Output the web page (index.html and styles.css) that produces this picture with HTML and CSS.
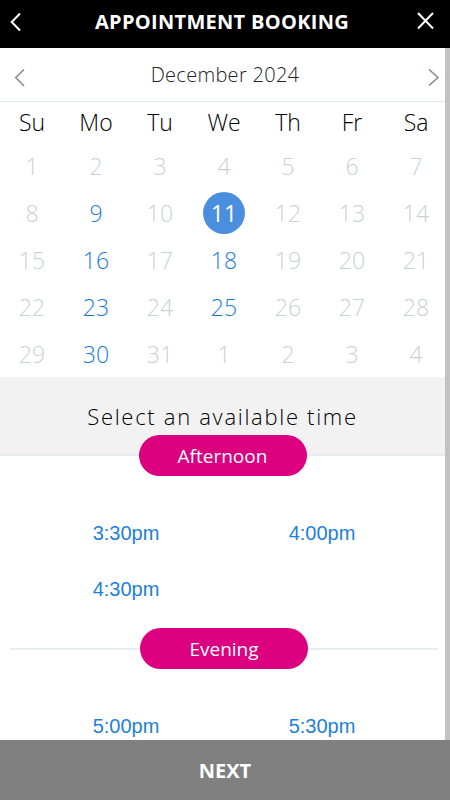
FILE: index.html
```html
<!DOCTYPE html>
<html lang="en">
<head>
  <meta charset="UTF-8" />
  <meta name="viewport" content="width=device-width, initial-scale=1.0" />
  <title>Appointment Booking</title>
  <link rel="stylesheet" href="styles.css">
</head>
<body>
  <header class="topbar">
    <svg class="top-icon back" width="24" height="24" viewBox="0 0 24 24"><path d="M12 3.5 L3.7 12 L12 20.5" /></svg>
    <h1>APPOINTMENT BOOKING</h1>
    <svg class="top-icon close" width="24" height="24" viewBox="0 0 24 24"><path d="M6 3 L21 18.5 M21 3 L6 18.5" /></svg>
  </header>

  <main class="content">
    <div class="month-nav">
      <svg class="nav-arrow" width="24" height="24" viewBox="0 0 24 24"><path d="M18 6.5 L9.7 14.5 L18 23" /></svg>
      <span class="month-title">December 2024</span>
      <svg class="nav-arrow" width="24" height="24" viewBox="0 0 24 24"><path d="M9 6.5 L18 14.5 L9 22.5" /></svg>
    </div>

    <div class="weekdays">
      <span>Su</span><span>Mo</span><span>Tu</span><span>We</span><span>Th</span><span>Fr</span><span>Sa</span>
    </div>

    <div class="days">
      <span class="day">1</span><span class="day">2</span><span class="day">3</span><span class="day">4</span><span class="day">5</span><span class="day">6</span><span class="day">7</span>
      <span class="day">8</span><span class="day open">9</span><span class="day">10</span><span class="day"><b class="selected">11</b></span><span class="day">12</span><span class="day">13</span><span class="day">14</span>
      <span class="day">15</span><span class="day open">16</span><span class="day">17</span><span class="day open">18</span><span class="day">19</span><span class="day">20</span><span class="day">21</span>
      <span class="day">22</span><span class="day open">23</span><span class="day">24</span><span class="day open">25</span><span class="day">26</span><span class="day">27</span><span class="day">28</span>
      <span class="day">29</span><span class="day open">30</span><span class="day">31</span><span class="day">1</span><span class="day">2</span><span class="day">3</span><span class="day">4</span>
    </div>

    <div class="time-head">Select an available time</div>

    <div class="period first">
      <span class="pill">Afternoon</span>
    </div>
    <div class="slots">
      <a class="slot">3:30pm</a>
      <a class="slot">4:00pm</a>
      <a class="slot">4:30pm</a>
    </div>

    <div class="period lined">
      <span class="line"></span>
      <span class="pill">Evening</span>
      <span class="line"></span>
    </div>
    <div class="slots">
      <a class="slot">5:00pm</a>
      <a class="slot">5:30pm</a>
    </div>
  </main>

  <footer class="next-bar">NEXT</footer>
</body>
</html>
```

FILE: styles.css
```css
* {
  box-sizing: border-box;
}
body {
  margin: 0;
  height: 800px;
  display: flex;
  flex-direction: column;
  font-family: 'Open Sans', 'Noto Sans', sans-serif;
  background: #fff;
  color: #111;
  overflow: hidden;
}
.topbar {
  height: 48px;
  flex-shrink: 0;
  background: #000;
  color: #fff;
  display: grid;
  grid-template-columns: 1fr auto 1fr;
  align-items: center;
  padding: 0 14px 5px 8px;
}
.topbar h1 {
  margin: 0;
  font-size: 20px;
  font-weight: 700;
  line-height: 24px;
  letter-spacing: 0.3px;
}
.top-icon path {
  fill: none;
  stroke: #fff;
  stroke-width: 2;
}
.top-icon.close {
  justify-self: end;
}
.content {
  flex: 1;
  overflow: hidden;
  border-right: 5px solid #c2c2c2;
}
.month-nav {
  height: 54px;
  display: flex;
  align-items: center;
  justify-content: space-between;
  padding: 0 1px 0 6px;
  border-bottom: 1px solid #e2e8eb;
}
.month-title {
  font-size: 20px;
  font-weight: 350;
  color: #222;
  letter-spacing: 0.3px;
}
.nav-arrow path {
  fill: none;
  stroke: #7b8a94;
  stroke-width: 1.5;
}
.weekdays,
.days {
  display: grid;
  grid-template-columns: repeat(7, 64px);
}
.weekdays span {
  height: 40px;
  line-height: 40px;
  text-align: center;
  font-size: 23px;
  font-weight: 350;
  color: #000;
}
.day {
  height: 47px;
  display: flex;
  align-items: center;
  justify-content: center;
  font-size: 23px;
  font-weight: 350;
  color: #c9d1d5;
}
.day.open {
  color: #1b7cd6;
}
.selected {
  width: 42px;
  height: 42px;
  border-radius: 50%;
  background: #4a8ee0;
  color: #fff;
  font-weight: 400;
  display: flex;
  align-items: center;
  justify-content: center;
}
.time-head {
  height: 79px;
  background: #f2f2f2;
  border-bottom: 2px solid #e5edf0;
  display: flex;
  align-items: center;
  justify-content: center;
  font-size: 22px;
  font-weight: 350;
  letter-spacing: 1.7px;
  color: #000;
  padding-top: 1px;
}
.period {
  display: flex;
  align-items: center;
  justify-content: center;
}
.period.first {
  margin-top: -21px;
}
.period.lined {
  margin-top: 11px;
  padding: 0 7px 0 10px;
}
.line {
  flex: 1;
  height: 2px;
  background: #e6eef2;
}
.pill {
  width: 168px;
  height: 41px;
  border-radius: 21px;
  background: #dc0080;
  color: #fff;
  font-size: 19px;
  display: flex;
  align-items: center;
  justify-content: center;
}
.slots {
  display: grid;
  grid-template-columns: 196px 196px;
  grid-auto-rows: 56px;
  padding: 29px 0 0 28px;
}
.slot {
  display: flex;
  align-items: center;
  justify-content: center;
  font-family: 'Liberation Sans', Arial, sans-serif;
  font-size: 20px;
  color: #1e80dc;
}
.next-bar {
  height: 60px;
  flex-shrink: 0;
  background: #808080;
  color: #fff;
  font-size: 20px;
  font-weight: 700;
  display: flex;
  align-items: center;
  justify-content: center;
}
```
